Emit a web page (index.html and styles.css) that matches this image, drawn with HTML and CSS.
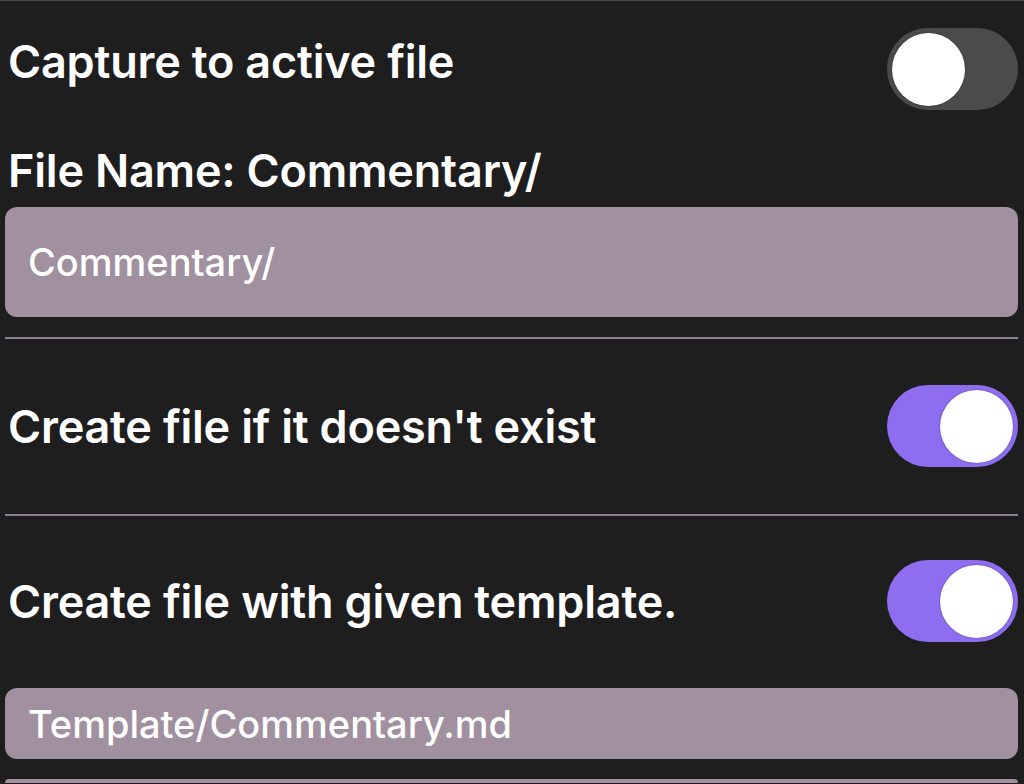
FILE: index.html
```html
<!DOCTYPE html>
<html>
<head>
<meta charset="utf-8">
<link rel="stylesheet" href="styles.css">
</head>
<body>
<div class="page">
  <div class="row row-first">
    <div class="label label-up">Capture to active file</div>
    <div class="toggle"><div class="knob"></div></div>
  </div>
  <div class="label field-label">File Name: Commentary/</div>
  <div class="input input-tall">Commentary/</div>
  <div class="divider"></div>
  <div class="row row-mid">
    <div class="label">Create file if it doesn't exist</div>
    <div class="toggle on"><div class="knob"></div></div>
  </div>
  <div class="divider divider-gap"></div>
  <div class="row row-last">
    <div class="label">Create file with given template.</div>
    <div class="toggle on"><div class="knob"></div></div>
  </div>
  <div class="input input-short">Template/Commentary.md</div>
  <div class="bottom-bar"></div>
</div>
</body>
</html>
```
FILE: styles.css
```css
html, body {
  margin: 0;
  padding: 0;
  background: #1e1e1e;
}
body {
  font-family: Inter, "Noto Sans", sans-serif;
  color: #ffffff;
  width: 1024px;
  height: 784px;
  overflow: hidden;
}
.page {
  border-top: 1px solid #4a4a4a;
  display: flex;
  flex-direction: column;
  padding: 0 6px 0 5px;
  height: 783px;
  box-sizing: border-box;
}
.page > * {
  flex-shrink: 0;
}
.row {
  display: flex;
  align-items: center;
  justify-content: space-between;
}
.row-first {
  padding-top: 27px;
}
.label {
  font-size: 45px;
  font-weight: 600;
  line-height: 1;
  padding-left: 3px;
  letter-spacing: -0.2px;
}
.label-up {
  margin-bottom: 16px;
}
.field-label {
  margin-top: 38px;
}
.toggle {
  width: 131px;
  height: 82px;
  border-radius: 41px;
  background: #4b4b4b;
  box-sizing: border-box;
  padding: 5px;
  display: flex;
  justify-content: flex-start;
  align-items: center;
}
.toggle.on {
  background: #8e6df0;
  justify-content: flex-end;
}
.knob {
  width: 73px;
  height: 73px;
  border-radius: 50%;
  background: #ffffff;
  box-shadow: 0 0 2px rgba(0,0,0,0.4);
}
.input {
  background: #a1909f;
  border-radius: 12px;
  font-size: 38px;
  font-weight: 500;
  display: flex;
  align-items: center;
  padding-left: 23px;
  color: #ffffff;
  box-sizing: border-box;
}
.input-tall {
  margin-top: 14px;
  height: 110px;
}
.input-short {
  margin-top: 46px;
  height: 71px;
}
.divider {
  height: 2px;
  background: #8a8190;
  margin-top: 20px;
}
.divider-gap {
  margin-top: 47px;
}
.row-mid {
  margin-top: 46px;
}
.row-last {
  margin-top: 44px;
}
.bottom-bar {
  margin-top: 20px;
  flex: 1 1 auto;
  background: #a1909f;
  border-radius: 4px 4px 0 0;
}
```
